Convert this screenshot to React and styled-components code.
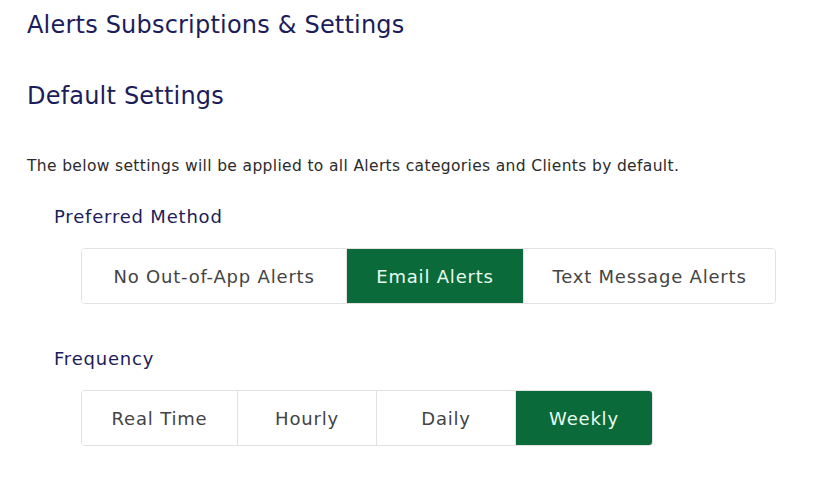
import React, { useState } from "react";
import styled, { createGlobalStyle } from "styled-components";

const GlobalStyle = createGlobalStyle`
  body {
    margin: 0;
    background: #ffffff;
    font-family: "DejaVu Sans", "Noto Sans", sans-serif;
  }
`;

const Page = styled.div`
  padding: 8px 27px 0;
  color: #1c1d5a;
`;

const Title = styled.h1`
  margin: 0;
  font-weight: 400;
  font-size: 24px;
  letter-spacing: 0.2px;
  line-height: 34px;
  color: #1c1d5a;
`;

const SectionTitle = styled(Title).attrs({ as: "h2" })`
  margin-top: 37px;
`;

const Description = styled.p`
  margin: 43px 0 0;
  font-size: 15.5px;
  letter-spacing: 0.35px;
  line-height: 20px;
  color: #2b2b2b;
`;

const Label = styled.div`
  margin: ${(p) => p.$top}px 0 0 27px;
  font-size: 18px;
  letter-spacing: 0.8px;
  line-height: 22px;
  color: #1c1d5a;
`;

const Segmented = styled.div`
  display: inline-flex;
  margin: 20px 0 0 54px;
  border: 1px solid #e2e2e2;
  border-radius: 4px;
  background: #fff;
  overflow: hidden;
`;

const Option = styled.button`
  box-sizing: border-box;
  height: 54px;
  padding: 0 20px;
  width: ${(p) => p.$width}px;
  border: 0;
  border-left: ${(p) => (p.$first ? "0" : "1px solid #e2e2e2")};
  background: ${(p) => (p.$active ? "#0b6a3a" : "#ffffff")};
  color: ${(p) => (p.$active ? "#e9fbef" : "#444444")};
  font-family: inherit;
  font-size: 18px;
  letter-spacing: 0.8px;
  white-space: nowrap;
  cursor: pointer;
`;

function SegmentGroup({ options, value, onChange }) {
  return (
    <Segmented>
      {options.map((o, i) => (
        <Option
          key={o.label}
          $first={i === 0}
          $width={o.width}
          $active={value === o.label}
          onClick={() => onChange(o.label)}
        >
          {o.label}
        </Option>
      ))}
    </Segmented>
  );
}

const methods = [
  { label: "No Out-of-App Alerts", width: 264 },
  { label: "Email Alerts", width: 177 },
  { label: "Text Message Alerts", width: 252 },
];

const frequencies = [
  { label: "Real Time", width: 155 },
  { label: "Hourly", width: 139 },
  { label: "Daily", width: 139 },
  { label: "Weekly", width: 137 },
];

export default function App() {
  const [method, setMethod] = useState("Email Alerts");
  const [freq, setFreq] = useState("Weekly");

  return (
    <Page>
      <GlobalStyle />
      <Title>Alerts Subscriptions &amp; Settings</Title>
      <SectionTitle>Default Settings</SectionTitle>
      <Description>
        The below settings will be applied to all Alerts categories and Clients by default.
      </Description>
      <Label $top={30}>Preferred Method</Label>
      <SegmentGroup options={methods} value={method} onChange={setMethod} />
      <Label $top={44}>Frequency</Label>
      <SegmentGroup options={frequencies} value={freq} onChange={setFreq} />
    </Page>
  );
}
